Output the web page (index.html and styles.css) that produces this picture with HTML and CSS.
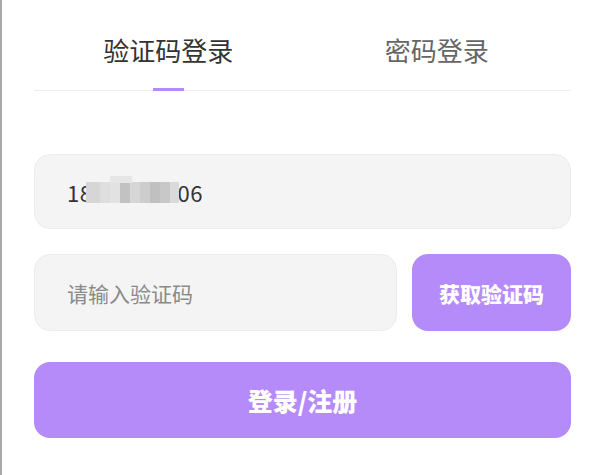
FILE: index.html
```html
<!DOCTYPE html>
<html lang="zh-CN">
<head>
<meta charset="utf-8">
<title>登录</title>
<link rel="stylesheet" href="styles.css">
</head>
<body>
<div class="panel">
  <div class="tabs">
    <div class="tab active">验证码登录</div>
    <div class="tab">密码登录</div>
  </div>
  <div class="form">
    <div class="field phone">
      <span class="num">18</span><span class="mask"><i class="m1"></i><i class="m2"></i><i class="m3"></i><i class="m4"></i><i class="m5"></i><i class="m6"></i><i class="m7"></i><i class="m8"></i><i class="m9"></i></span><span class="num">06</span>
    </div>
    <div class="code-row">
      <div class="field code"><span class="placeholder">请输入验证码</span></div>
      <button class="btn get-code">获取验证码</button>
    </div>
    <button class="btn submit">登录/注册</button>
  </div>
</div>
</body>
</html>
```
FILE: styles.css
```css
html, body {
  margin: 0;
  padding: 0;
  background: #ffffff;
}
body {
  border-left: 2px solid #a9a9a9;
  min-height: 475px;
  box-sizing: border-box;
  font-family: "Noto Sans CJK SC", "Noto Sans", sans-serif;
}
.panel {
  padding: 0 18px 0 32px;
}
.tabs {
  display: flex;
  border-bottom: 1px solid #eeeeee;
}
.tab {
  flex: 1;
  position: relative;
  text-align: center;
  font-size: 26px;
  line-height: 26px;
  height: 26px;
  padding: 37px 0 27px;
  color: #666666;
}
.tab.active {
  color: #333333;
}
.tab.active::after {
  content: "";
  position: absolute;
  left: 50%;
  bottom: -1px;
  width: 31px;
  height: 3px;
  margin-left: -15px;
  background: #b48af3;
}
.form {
  display: flex;
  flex-direction: column;
  padding-top: 63px;
}
.field {
  box-sizing: border-box;
  height: 75px;
  background: #f4f4f4;
  border: 1px solid #ececec;
  border-radius: 16px;
  display: flex;
  align-items: center;
  padding-left: 32px;
}
.num {
  font-size: 22px;
  color: #333333;
  letter-spacing: 0.5px;
}
.mask {
  display: inline-flex;
  height: 21px;
  margin-left: -6px;
  margin-right: -2px;
  margin-top: 2px;
  position: relative;
}
.mask i {
  display: block;
  width: 10px;
  height: 21px;
}
.mask .m1 { background: #d6d6d6; width: 14px; }
.mask .m2 { background: #dedede; }
.mask .m3 { background: #e2e2e2; }
.mask .m4 { background: #c2c2c2; }
.mask .m5 { background: #d6d6d6; }
.mask .m6 { background: #cdcdcd; }
.mask .m7 { background: #c0c0c0; }
.mask .m8 { background: #c8c8c8; }
.mask .m9 { background: #dadada; width: 9px; }
.mask .m2::before {
  content: "";
  display: block;
  position: absolute;
  left: 24px;
  top: -6px;
  width: 22px;
  height: 7px;
  background: #e6e6e6;
}
.code-row {
  display: flex;
  gap: 15px;
  margin-top: 25px;
}
.field.code {
  flex: 1;
  height: 77px;
}
.placeholder {
  font-size: 21px;
  color: #8a8a8a;
}
.btn {
  border: none;
  background: #b58af9;
  color: #ffffff;
  font-family: "Noto Sans CJK SC", "Noto Sans", sans-serif;
  font-weight: 900;
  border-radius: 16px;
  padding: 0;
  cursor: pointer;
}
.get-code {
  width: 159px;
  height: 77px;
  font-size: 21px;
}
.submit {
  margin-top: 31px;
  height: 76px;
  font-size: 25px;
}
```
